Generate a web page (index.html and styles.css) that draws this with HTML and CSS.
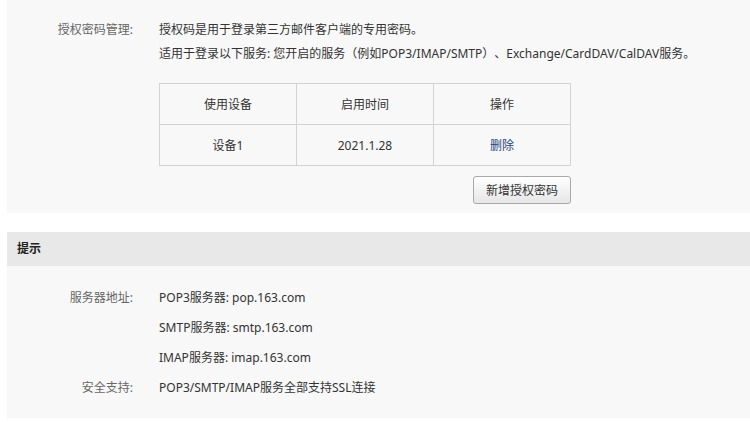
FILE: index.html
```html
<!DOCTYPE html>
<html lang="zh-CN">
<head>
<meta charset="utf-8">
<title>授权密码管理</title>
<link rel="stylesheet" href="styles.css">
</head>
<body>
<div class="page">
  <section class="panel panel-auth">
    <div class="row">
      <div class="label">授权密码管理:</div>
      <div class="content">
        <p class="line">授权码是用于登录第三方邮件客户端的专用密码。</p>
        <p class="line">适用于登录以下服务: 您开启的服务（例如POP3/IMAP/SMTP）、Exchange/CardDAV/CalDAV服务。</p>
        <table class="devices">
          <thead>
            <tr><th>使用设备</th><th>启用时间</th><th>操作</th></tr>
          </thead>
          <tbody>
            <tr><td>设备1</td><td>2021.1.28</td><td><a class="del" href="#">删除</a></td></tr>
          </tbody>
        </table>
        <div class="actions">
          <button class="btn" type="button">新增授权密码</button>
        </div>
      </div>
    </div>
  </section>

  <section class="panel panel-tips">
    <h2 class="panel-head">提示</h2>
    <div class="panel-body">
      <div class="row">
        <div class="label">服务器地址:</div>
        <div class="content">
          <p class="tip">POP3服务器: pop.163.com</p>
          <p class="tip">SMTP服务器: smtp.163.com</p>
          <p class="tip">IMAP服务器: imap.163.com</p>
        </div>
      </div>
      <div class="row">
        <div class="label">安全支持:</div>
        <div class="content">
          <p class="tip">POP3/SMTP/IMAP服务全部支持SSL连接</p>
        </div>
      </div>
    </div>
  </section>
</div>
</body>
</html>
```

FILE: styles.css
```css
html, body {
  margin: 0;
  padding: 0;
  background: #fff;
}
body {
  font-family: "Noto Sans", "Noto Sans CJK SC", "Microsoft YaHei", sans-serif;
  font-size: 12px;
  color: #333;
  text-spacing-trim: space-all;
}
.page {
  padding-left: 7px;
}
.panel {
  background: #f8f8f8;
}
.panel-auth {
  padding: 18px 0 9px;
}
.row {
  display: flex;
  gap: 26px;
}
.label {
  width: 126px;
  flex: none;
  text-align: right;
  color: #666;
}
.panel-auth .label {
  line-height: 24px;
}
.content {
  flex: 1;
}
.line {
  margin: 0;
  line-height: 24px;
}
.devices {
  margin-top: 17px;
  border-collapse: collapse;
  width: 412px;
}
.devices th,
.devices td {
  border: 1px solid #d3d3d3;
  height: 40px;
  padding: 0;
  text-align: center;
  font-weight: normal;
  width: 33.3%;
}
.del {
  color: #23467c;
  text-decoration: none;
}
.actions {
  width: 412px;
  display: flex;
  justify-content: flex-end;
  margin-top: 10px;
}
.btn {
  height: 28px;
  width: 98px;
  padding: 0;
  font-family: inherit;
  font-size: 12px;
  color: #333;
  border: 1px solid #a9a9a9;
  border-radius: 3px;
  background: linear-gradient(#ffffff, #e6e6e6);
}
.panel-tips {
  margin-top: 19px;
}
.panel-head {
  margin: 0;
  height: 34px;
  line-height: 34px;
  padding-left: 10px;
  background: #e8e8e8;
  font-size: 12px;
  font-weight: bold;
  color: #222;
}
.panel-body {
  padding: 17px 0 15px;
}
.panel-body .label {
  line-height: 30px;
}
.tip {
  margin: 0;
  line-height: 30px;
}
```
